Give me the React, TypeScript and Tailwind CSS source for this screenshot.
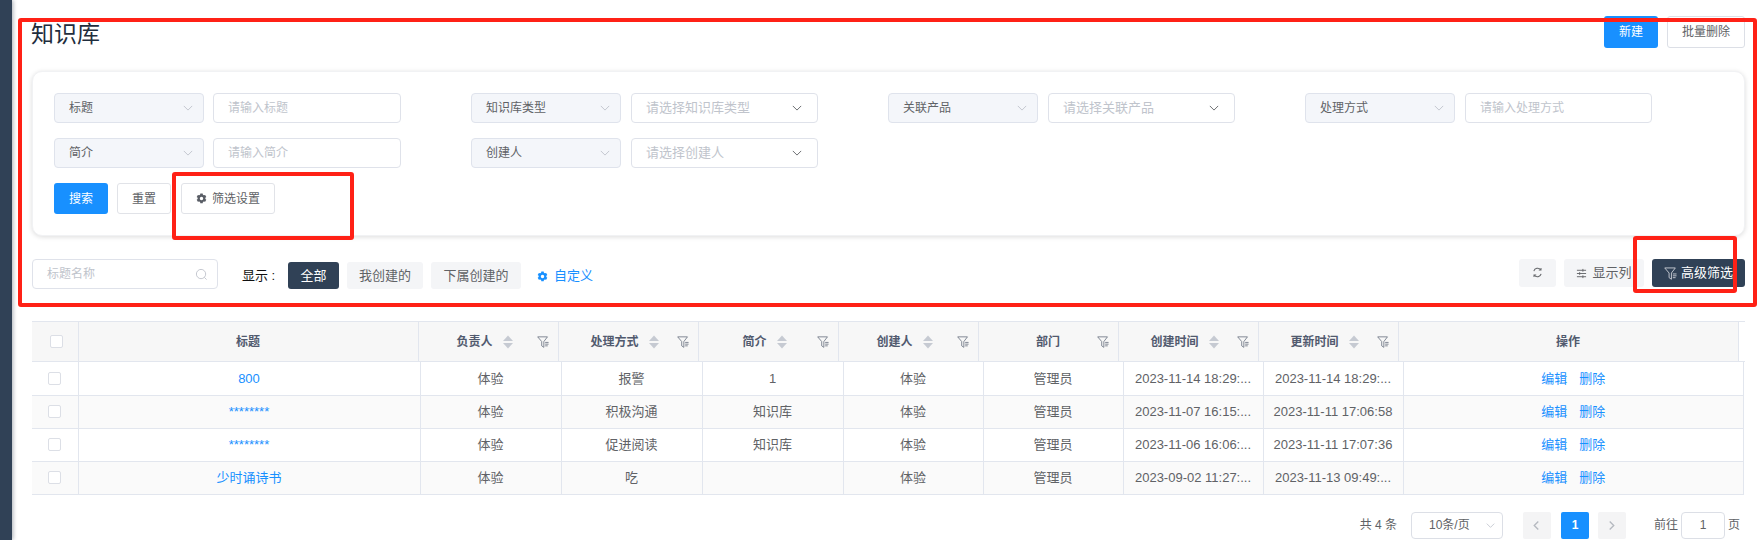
import React from "react";

function Gear({ className }: { className: string }) {
  return (
    <svg viewBox="0 0 16 16" className={className} fill="currentColor">
      <path fillRule="evenodd" d="M6.300 0.800h3.400l.4 1.800 1.300.8 1.900-.6 1.700 2.900-1.400 1.300v1.600l1.400 1.300-1.700 2.900-1.900-.6-1.300.8-.4 1.800H6.300l-.4-1.800-1.300-.8-1.900.6-1.700-2.900 1.400-1.300V7l-1.400-1.300 1.700-2.900 1.900.6 1.300-.8zM8 5.500a2.500 2.500 0 1 0 0 5 2.500 2.500 0 0 0 0-5z" />
    </svg>
  );
}

function Chevron({ className }: { className: string }) {
  return (
    <svg viewBox="0 0 12 12" className={className} fill="none" stroke="currentColor" strokeWidth="1.100">
      <path d="M1 3.500l5 5 5-5" />
    </svg>
  );
}

function FilterIcon({ className }: { className: string }) {
  return (
    <svg viewBox="0 0 14 14" className={className} fill="none" stroke="currentColor" strokeWidth="1">
      <path d="M0.800 1h11.400L8 6.500V13.200L5.500 11.500V6.500z" />
      <path d="M9.500 7.500h4M9.500 9.500h4M9.500 11.500h3" />
    </svg>
  );
}

function Sort() {
  return (
    <svg viewBox="0 0 10 14" className="w-[10px] h-[14px] text-[#c6cad2]" fill="currentColor">
      <path d="M5 0.500L10 6H0z" />
      <path d="M5 13.500L0 8H10z" />
    </svg>
  );
}

function Field({ label, placeholder, select, first }: { label: string; placeholder: string; select?: boolean; first?: boolean }) {
  return (
    <div className={`flex ${first ? "gap-[9px]" : "gap-[10px]"}`}>
      <div className="w-[150px] h-[30px] flex items-center justify-between pl-[14px] pr-[10px] bg-[#f4f6fa] border border-[#dfe3ec] rounded-[4px] text-[12px] text-[#606266]">
        <span>{label}</span>
        <Chevron className="w-[10px] h-[10px] text-[#c0c4cc]" />
      </div>
      <div className={`${first ? "w-[188px]" : "w-[187px]"} h-[30px] flex items-center justify-between pl-[14px] pr-[15px] bg-white border border-[#dfe2ea] rounded-[4px] text-[#c0c4cc] ${select ? "text-[13px]" : "text-[12px]"}`}>
        <span>{placeholder}</span>
        {select && <Chevron className="w-[10px] h-[10px] text-[#606266]" />}
      </div>
    </div>
  );
}

const headers: { t: string; sort?: boolean }[] = [
  { t: "负责人", sort: true },
  { t: "处理方式", sort: true },
  { t: "简介", sort: true },
  { t: "创建人", sort: true },
  { t: "部门" },
  { t: "创建时间", sort: true },
  { t: "更新时间", sort: true },
];

const rows = [
  ["800", "体验", "报警", "1", "体验", "管理员", "2023-11-14 18:29:...", "2023-11-14 18:29:..."],
  ["********", "体验", "积极沟通", "知识库", "体验", "管理员", "2023-11-07 16:15:...", "2023-11-11 17:06:58"],
  ["********", "体验", "促进阅读", "知识库", "体验", "管理员", "2023-11-06 16:06:...", "2023-11-11 17:07:36"],
  ["少时诵诗书", "体验", "吃", "", "体验", "管理员", "2023-09-02 11:27:...", "2023-11-13 09:49:..."],
];

export default function App() {
  return (
    <div className="relative w-[1764px] h-[540px] overflow-hidden bg-white flex font-['Liberation_Sans','Noto_Sans_CJK_SC',sans-serif]">
      <div className="w-[12px] shrink-0 bg-[#304156] shadow-[1px_0_4px_rgba(0,21,41,0.35)]" />
      <main className="w-[1713px] ml-[20px] flex flex-col">
        <div className="h-[48px] pt-[16px] flex justify-between">
          <h1 className="text-[23px] leading-[36px] text-[#1f2d3d] -ml-[1px]">知识库</h1>
          <div className="flex gap-[9px]">
            <button className="w-[54px] h-[32px] bg-[#1890ff] text-white text-[12px] rounded-[3px]">新建</button>
            <button className="w-[78px] h-[32px] bg-white border border-[#dcdfe6] text-[#606266] text-[12px] rounded-[3px]">批量删除</button>
          </div>
        </div>

        <section className="mt-[23px] h-[165px] rounded-[10px] bg-white border border-[#f1f2f4] shadow-[0_1px_5px_rgba(0,0,0,0.14)] pt-[21px] pl-[21px]">
          <div className="grid grid-cols-[repeat(4,417px)] gap-y-[15px]">
            <Field label="标题" placeholder="请输入标题" first />
            <Field label="知识库类型" placeholder="请选择知识库类型" select />
            <Field label="关联产品" placeholder="请选择关联产品" select />
            <Field label="处理方式" placeholder="请输入处理方式" />
            <Field label="简介" placeholder="请输入简介" first />
            <Field label="创建人" placeholder="请选择创建人" select />
          </div>
          <div className="mt-[15px] flex">
            <button className="w-[54px] h-[31px] bg-[#1890ff] text-white text-[12px] rounded-[3px]">搜索</button>
            <button className="ml-[9px] w-[54px] h-[31px] bg-white border border-[#e1e3e8] text-[#606266] text-[12px] rounded-[3px]">重置</button>
            <button className="ml-[10px] w-[94px] h-[31px] bg-white border border-[#e1e3e8] text-[#606266] text-[12px] rounded-[3px] flex items-center justify-center gap-[5px]">
              <Gear className="w-[11px] h-[11px] text-[#5a5e66]" />
              筛选设置
            </button>
          </div>
        </section>

        <div className="mt-[23px] h-[30px] flex items-start">
          <div className="w-[186px] h-[30px] flex items-center justify-between pl-[14px] pr-[9px] border border-[#dfe2ea] rounded-[4px] text-[12px] text-[#c0c4cc]">
            <span>标题名称</span>
            <svg viewBox="0 0 14 14" className="w-[13px] h-[13px]" fill="none" stroke="currentColor" strokeWidth="1">
              <circle cx="6.500" cy="6.500" r="5" />
              <path d="M10 10l2.500 2.500" />
            </svg>
          </div>
          <span className="ml-[24px] mt-[7px] w-[46px] text-[13px] leading-[20px] text-[#111]">显示 :</span>
          <div className="mt-[3px] flex text-[13px]">
            <button className="w-[51px] h-[27px] bg-[#304156] text-white rounded-[3px]">全部</button>
            <button className="ml-[8px] w-[76px] h-[27px] bg-[#f4f5f7] text-[#606266] rounded-[3px]">我创建的</button>
            <button className="ml-[8px] w-[90px] h-[27px] bg-[#f4f5f7] text-[#606266] rounded-[3px]">下属创建的</button>
          </div>
          <div className="ml-[16px] mt-[7px] flex items-center gap-[6px] text-[13px] leading-[20px] text-[#1890ff]">
            <Gear className="w-[11px] h-[11px]" />
            自定义
          </div>
          <div className="ml-auto flex gap-[8px] text-[13px]">
            <button className="w-[37px] h-[28px] bg-[#f4f5f7] rounded-[3px] flex items-center justify-center text-[#606266]">
              <svg viewBox="0 0 12 12" className="w-[11px] h-[11px] -mt-[2px]" fill="none" stroke="currentColor" strokeWidth="1.100">
                <path d="M2 4.500A4.300 4.300 0 0 1 9.500 3M10 7.500A4.300 4.300 0 0 1 2.500 9" />
                <path d="M9.800 1v2.400H7.400M2.200 11V8.600h2.400" />
              </svg>
            </button>
            <button className="w-[80px] h-[28px] bg-[#f4f5f7] rounded-[3px] flex items-center justify-center gap-[5px] text-[#606266]">
              <svg viewBox="0 0 12 12" className="w-[11px] h-[11px]" fill="none" stroke="currentColor" strokeWidth="1">
                <path d="M1 2.500h10M1 6h10M1 9.500h10" />
                <path d="M7.500 1v3M4 4.500v3M7.500 8v3" />
              </svg>
              显示列
            </button>
            <button className="w-[93px] h-[28px] bg-[#304156] rounded-[3px] flex items-center justify-center gap-[4px] text-white">
              <FilterIcon className="w-[13px] h-[13px] text-[#c8ccd4]" />
              高级筛选
            </button>
          </div>
        </div>

        <div className="mt-[32px] w-[1713px]">
          <table className="table-fixed border-collapse w-[1713px] h-[41px] text-[12px] font-bold text-[#515a6e]">
            <colgroup>
              <col className="w-[46px]" />
              <col className="w-[340px]" />
              {headers.map((h) => (
                <col key={h.t} className="w-[140px]" />
              ))}
              <col className="w-[340px]" />
              <col />
            </colgroup>
            <thead>
              <tr className="border-y border-[#e2e6ee]">
                <th className="p-0 bg-[#f7f7f7] border-r border-[#e2e6ee]">
                  <span className="block ml-[18px] w-[13px] h-[13px] bg-white border border-[#dcdfe6] rounded-[2px]" />
                </th>
                <th className="p-0 bg-[#f7f7f7] border-r border-[#e2e6ee] font-bold">标题</th>
                {headers.map((h) => (
                  <th key={h.t} className="p-0 bg-[#f7f7f7] border-r border-[#e2e6ee] font-bold">
                    <div className={`relative flex items-center justify-center gap-[10px] ${h.sort ? "pr-[7px]" : ""}`}>
                      <span>{h.t}</span>
                      {h.sort && <Sort />}
                      <FilterIcon className="absolute right-[9px] top-[3px] w-[12px] h-[12px] text-[#6f7785]" />
                    </div>
                  </th>
                ))}
                <th className="p-0 bg-[#f7f7f7] border-r border-[#e2e6ee] font-bold">操作</th>
                <th className="p-0 bg-white" />
              </tr>
            </thead>
          </table>
          <table className="table-fixed border-collapse w-[1712px] text-[13px] text-[#606266]">
            <colgroup>
              <col className="w-[46px]" />
              <col className="w-[342px]" />
              <col className="w-[141px]" />
              <col className="w-[141px]" />
              <col className="w-[141px]" />
              <col className="w-[140px]" />
              <col className="w-[140px]" />
              <col className="w-[140px]" />
              <col className="w-[140px]" />
              <col />
            </colgroup>
            <tbody>
              {rows.map((r, i) => (
                <tr key={i} className={`h-[33px] border-b border-[#e2e6ee] ${i % 2 ? "bg-[#fafafa]" : "bg-white"}`}>
                  <td className="p-0 border-r border-[#e2e6ee]">
                    <span className="block ml-[16px] w-[13px] h-[13px] bg-white border border-[#dcdfe6] rounded-[2px]" />
                  </td>
                  <td className="p-0 border-r border-[#e2e6ee] text-center text-[#1890ff]">{r[0]}</td>
                  {r.slice(1).map((c, j) => (
                    <td key={j} className="p-0 border-r border-[#e2e6ee] text-center whitespace-nowrap">{c}</td>
                  ))}
                  <td className="p-0 border-r border-[#e2e6ee] text-center text-[#1890ff]">
                    <span className="mr-[12px]">编辑</span>
                    <span>删除</span>
                  </td>
                </tr>
              ))}
            </tbody>
          </table>
        </div>

        <div className="mt-[17px] h-[27px] flex items-center justify-end pr-[5px] text-[12px] text-[#606266]">
          <span>共 4 条</span>
          <div className="ml-[14px] w-[92px] h-[27px] flex items-center justify-between pl-[17px] pr-[7px] border border-[#dcdfe6] rounded-[4px]">
            <span>10条/页</span>
            <Chevron className="w-[9px] h-[9px] text-[#c0c4cc]" />
          </div>
          <button className="ml-[20px] w-[28px] h-[27px] bg-[#f4f4f5] rounded-[2px] flex items-center justify-center text-[#b5b9c0]">
            <svg viewBox="0 0 10 12" className="w-[9px] h-[11px]" fill="none" stroke="currentColor" strokeWidth="1.500"><path d="M7 1.500L2.500 6 7 10.500" /></svg>
          </button>
          <button className="ml-[10px] w-[28px] h-[27px] bg-[#1890ff] text-white font-bold rounded-[2px]">1</button>
          <button className="ml-[9px] w-[28px] h-[27px] bg-[#f4f4f5] rounded-[2px] flex items-center justify-center text-[#b5b9c0]">
            <svg viewBox="0 0 10 12" className="w-[9px] h-[11px]" fill="none" stroke="currentColor" strokeWidth="1.500"><path d="M3 1.500L7.500 6 3 10.500" /></svg>
          </button>
          <span className="ml-[28px]">前往</span>
          <div className="ml-[3px] w-[44px] h-[27px] flex items-center justify-center border border-[#dcdfe6] rounded-[4px]">1</div>
          <span className="ml-[3px]">页</span>
        </div>
      </main>

      <div className="absolute left-[18px] top-[18px] w-[1739px] h-[289px] border-[4px] border-[#ff2116] rounded-[3px]" />
      <div className="absolute left-[172px] top-[172px] w-[182px] h-[68px] border-[4px] border-[#ff2116] rounded-[3px]" />
      <div className="absolute left-[1633px] top-[236px] w-[104px] h-[57px] border-[4px] border-[#ff2116] rounded-[3px]" />
    </div>
  );
}
